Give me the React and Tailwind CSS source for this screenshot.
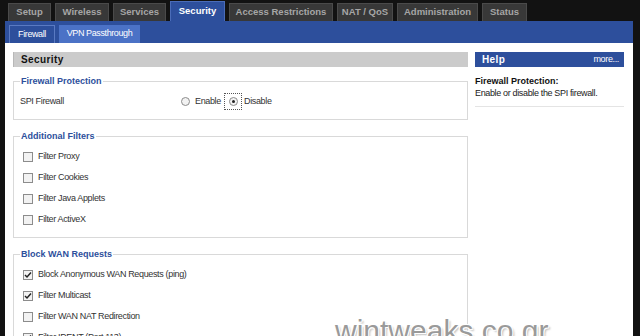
import React from 'react';

const sans = { fontFamily: '"Liberation Sans", Arial, sans-serif' };

const tabs = [
  { label: 'Setup', w: 'w-[43px]' },
  { label: 'Wireless', w: 'w-[54px]' },
  { label: 'Services', w: 'w-[53px]' },
  { label: 'Security', w: 'w-[55px]', active: true },
  { label: 'Access Restrictions', w: 'w-[104px]' },
  { label: 'NAT / QoS', w: 'w-[56px]' },
  { label: 'Administration', w: 'w-[81px]' },
  { label: 'Status', w: 'w-[45px]' },
];

function Tab({ label, w, active }) {
  return (
    <div
      className={`${w} flex items-center justify-center text-[9.5px] font-bold border border-b-0 whitespace-nowrap ${
        active
          ? 'h-[20px] bg-[#2d4f9c] border-[#4a6cb8] text-white'
          : 'h-[18px] mt-[2px] bg-[#383838] border-[#4a4a4a] text-[#a6a6a6]'
      }`}
    >
      {label}
    </div>
  );
}

function Check({ checked }) {
  return (
    <span className="w-[10px] h-[10px] border border-[#8c8c8c] bg-[#f2f2f2] flex items-center justify-center shrink-0">
      {checked && (
        <svg width="8" height="8" viewBox="0 0 8 8">
          <path d="M1 4 L3 6 L7 1.5" stroke="#222" strokeWidth="1.5" fill="none" />
        </svg>
      )}
    </span>
  );
}

function Row({ label, checked }) {
  return (
    <div className="h-[21px] flex items-center gap-[5px] pl-[3px]">
      <Check checked={checked} />
      <span>{label}</span>
    </div>
  );
}

function Fieldset({ title, children }) {
  return (
    <fieldset className="border border-[#d9d9d9] pl-[6px] pr-0 pt-[4px] pb-[7px] m-0 min-w-0">
      <legend className="text-[#2d4f9c] font-bold text-[9px] leading-[12px] tracking-normal px-[1px]">
        {title}
      </legend>
      {children}
    </fieldset>
  );
}

function Radio({ on }) {
  return (
    <span className="w-[9px] h-[9px] rounded-full border border-[#8c8c8c] bg-[#f2f2f2] flex items-center justify-center shrink-0">
      {on && <span className="w-[3px] h-[3px] rounded-full bg-[#222]" />}
    </span>
  );
}

export default function App() {
  return (
    <div className="w-[640px] h-[336px] bg-[#121212] overflow-hidden relative text-[#333]" style={sans}>
      <div className="flex gap-[4px] pl-[8px] pt-[1px]">
        {tabs.map(t => (
          <Tab key={t.label} {...t} />
        ))}
      </div>

      <div className="ml-[5px] w-[628px]">
        <div className="h-[22px] bg-[#2d4f9c] flex items-end gap-[4px] pl-[4px] text-[9px] tracking-[-0.4px] text-white">
          <div className="h-[18px] w-[46px] flex items-center justify-center bg-[#2d4f9c] border border-b-0 border-[#5a7ac2]">
            Firewall
          </div>
          <div className="h-[18px] w-[81px] flex items-center justify-center bg-[#4b72c6] whitespace-nowrap">
            VPN Passthrough
          </div>
        </div>

        <div className="bg-white h-[300px] flex pt-[9px] pl-[8px] text-[9px] tracking-[-0.35px]">
          <div className="w-[455px] flex flex-col">
            <div className="h-[15px] bg-[#cbcbcb] border-l border-[#b8b8b8] pl-[7px] flex items-center font-bold text-[10px] text-[#111] tracking-[0.4px]">
              Security
            </div>
            <div className="mt-[8px]">
              <Fieldset title="Firewall Protection">
                <div className="h-[21px] flex items-center">
                  <span className="w-[161px]">SPI Firewall</span>
                  <Radio />
                  <span className="ml-[5px] w-[26px]">Enable</span>
                  <span className="ml-[3px] h-[17px] w-[18px] border border-dotted border-[#555] flex items-center justify-center">
                    <Radio on />
                  </span>
                  <span className="ml-[2px]">Disable</span>
                </div>
              </Fieldset>
            </div>
            <div className="mt-[10px]">
              <Fieldset title="Additional Filters">
                <Row label="Filter Proxy" />
                <Row label="Filter Cookies" />
                <Row label="Filter Java Applets" />
                <Row label="Filter ActiveX" />
              </Fieldset>
            </div>
            <div className="mt-[10px]">
              <Fieldset title="Block WAN Requests">
                <Row label="Block Anonymous WAN Requests (ping)" checked />
                <Row label="Filter Multicast" checked />
                <Row label="Filter WAN NAT Redirection" />
                <Row label="Filter IDENT (Port 113)" checked />
              </Fieldset>
            </div>
          </div>

          <div className="w-[149px] ml-[7px] flex flex-col">
            <div className="h-[15px] bg-[#2d4f9c] text-white flex items-center justify-between pl-[7px] pr-[5px]">
              <span className="font-bold text-[10px] tracking-[0.4px]">Help</span>
              <span>more...</span>
            </div>
            <div className="mt-[8px] font-bold text-[9px] leading-[12px] tracking-normal text-[#111]">
              Firewall Protection:
            </div>
            <div className="leading-[13px] text-[#222] whitespace-nowrap">Enable or disable the SPI firewall.</div>
            <div className="mt-[6px] border-t border-[#e4e4e4]" />
          </div>
        </div>
      </div>

      <div
        className="absolute left-[335px] top-[316px] text-[30px] leading-[30px] text-[#9a9a9a]"
        style={{
          textShadow: '1px 1px 0 #fff, -1px -1px 0 #fff, 1px -1px 0 #fff, -1px 1px 0 #fff, 2px 2px 2px #bbb',
        }}
      >
        wintweaks.co.gr
      </div>
    </div>
  );
}
